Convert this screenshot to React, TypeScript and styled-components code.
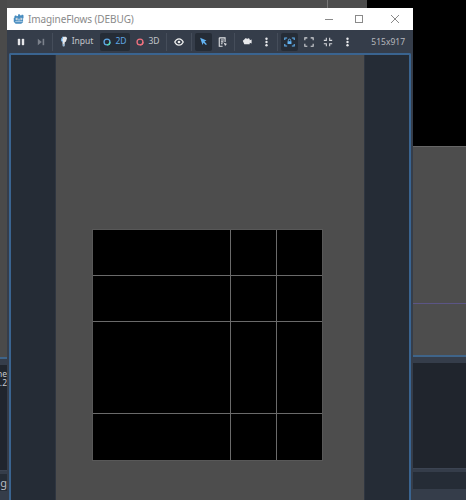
import React from "react";
import styled, { createGlobalStyle } from "styled-components";

const GlobalStyle = createGlobalStyle`
  html, body {
    margin: 0;
    padding: 0;
    width: 466px;
    height: 500px;
    overflow: hidden;
    background: #000;
    font-family: "Noto Sans", "Open Sans", sans-serif;
  }
`;

const Page = styled.div`
  display: flex;
  width: 466px;
  height: 500px;
  overflow: hidden;
`;

const BackLeft = styled.div`
  width: 7px;
  flex: none;
  display: flex;
  flex-direction: column;
  background: #4a4a4a;
`;

const BackGrey = styled.div`
  height: 349px;
  flex: none;
  background: #4a4a4a;
  border-bottom: 2px solid #3f6489;
  box-sizing: content-box;
  margin-top: 8px;
`;

const BackStrip = styled.div`
  height: 6px;
  flex: none;
  background: #353d4a;
`;

const BackLog = styled.div<{ $h: number }>`
  height: ${(p) => p.$h}px;
  flex: none;
  box-sizing: border-box;
  background: #20252d;
  border-bottom: 1px solid #3c4452;
  font: 8.5px/9px "Noto Sans", sans-serif;
  color: #c6c9ce;
  display: flex;
  flex-direction: column;
  align-items: flex-end;
  padding-top: 4px;
  overflow: hidden;
`;

const LogLine = styled.div`
  white-space: nowrap;
`;

const BackTab = styled.div`
  height: 20px;
  flex: none;
  box-sizing: border-box;
  background: #252c36;
  border-top: 3px solid #353d4a;
  color: #b9bcc2;
  font-size: 11px;
  line-height: 17px;
  text-align: right;
  overflow: hidden;
`;

const BackFoot = styled.div`
  flex: 1;
  background: #353d4a;
`;

const Middle = styled.div`
  width: 406px;
  flex: none;
  display: flex;
  flex-direction: column;
`;

const TopStrip = styled.div`
  height: 8px;
  flex: none;
  display: flex;
  background: #000;
`;

const TopGrey = styled.div`
  width: 360px;
  flex: none;
  background: #4d4d4d;
  display: flex;
  justify-content: flex-end;
  padding-right: 39px;
  box-sizing: border-box;
`;

const TopLine = styled.div`
  width: 1px;
  background: #777;
`;

const Window = styled.div`
  flex: 1;
  min-height: 0;
  display: flex;
  flex-direction: column;
  background: #353d4a;
`;

const TitleBar = styled.div`
  height: 22px;
  flex: none;
  display: flex;
  align-items: center;
  background: #fff;
  padding-left: 6px;
  color: #8a8a8a;
  font: 10px "Noto Sans", "Open Sans", sans-serif;
`;

const TitleText = styled.span`
  margin-left: 3px;
  letter-spacing: -0.1px;
`;

const WindowButtons = styled.div`
  margin-left: auto;
  display: flex;
  align-items: center;
  padding-right: 14px;
  gap: 22px;
  color: #8a8a8a;

  > :last-child {
    margin-left: 6px;
  }
`;

const Toolbar = styled.div`
  height: 23px;
  flex: none;
  display: flex;
  align-items: center;
  gap: 3px;
  padding: 0 8px 0 6px;
  color: #d6d8dc;
`;

const ToolButton = styled.div<{ $w: number; $active?: boolean; $blue?: boolean }>`
  width: ${(p) => p.$w}px;
  height: 18px;
  flex: none;
  display: flex;
  align-items: center;
  justify-content: center;
  gap: 4px;
  border-radius: 2px;
  background: ${(p) => (p.$active ? "#252c36" : "transparent")};
  color: ${(p) => (p.$blue ? "#5fa8e6" : "#c3c6cb")};
  font-size: 8.5px;
  line-height: 1;
`;

const Separator = styled.div`
  width: 1px;
  height: 18px;
  flex: none;
  background: #454d5a;
`;

const SizeLabel = styled.span`
  margin-left: auto;
  color: #b5b8bd;
  font-size: 8.5px;
`;

const Frame = styled.div`
  flex: 1;
  min-height: 0;
  margin: 0 2px 0 2px;
  display: flex;
  border: 2px solid #3a6490;
  border-bottom: none;
  border-radius: 2px 2px 0 0;
`;

const SideBar = styled.div`
  width: 44px;
  flex: none;
  background: #252c36;
`;

const Viewport = styled.div`
  flex: 1;
  background: #4d4d4d;
  padding: 174px 0 0 36px;
  box-sizing: border-box;
  border-left: 1px solid #2f3641;
  border-right: 1px solid #2f3641;
`;

const GameGrid = styled.div`
  display: grid;
  grid-template-columns: 137px 45px 45px;
  grid-template-rows: 45px 45px 91px 46px;
  gap: 1px;
  width: 229px;
  background: #6a6a6a;
  border: 1px solid #585858;
`;

const Cell = styled.div`
  background: #000;
`;

const BackRight = styled.div`
  flex: 1;
  display: flex;
  flex-direction: column;
`;

const RightBlack = styled.div`
  height: 146px;
  flex: none;
  background: #000;
`;

const RightGrey = styled.div`
  height: 211px;
  flex: none;
  background: #4d4d4d;
  border-top: 1px solid #666;
  border-bottom: 2px solid #3f6489;
  box-sizing: border-box;
  padding-top: 156px;
`;

const PurpleLine = styled.div`
  height: 1px;
  background: #5b5585;
`;

const Godot = () => (
  <svg width="12" height="12" viewBox="0 0 16 16">
    <path d="M2 4l2-1 1 1.4 1.6-.4L7 1.600h2l.4 1.400 1.600.4 1-1.400 2 1v3.600l-.6.6v5l-2.500 2H3.500L1 11.600v-5L2 6z" fill="#478cbf" />
    <circle cx="5.300" cy="8" r="1.800" fill="#fff" />
    <circle cx="10.700" cy="8" r="1.800" fill="#fff" />
    <circle cx="5.500" cy="8" r=".9" fill="#2f5f85" />
    <circle cx="10.500" cy="8" r=".9" fill="#2f5f85" />
    <rect x="7.300" y="8.500" width="1.400" height="1.500" fill="#fff" />
    <path d="M3 11.500h10" stroke="#cfe3f2" strokeWidth="1" />
  </svg>
);

const Pause = () => (
  <svg width="8" height="8" viewBox="0 0 10 10">
    <rect x="1" y="1" width="3" height="8" rx="1" fill="#e6e7ea" />
    <rect x="6" y="1" width="3" height="8" rx="1" fill="#e6e7ea" />
  </svg>
);

const Step = () => (
  <svg width="8" height="8" viewBox="0 0 10 10">
    <path d="M1 1l5 4-5 4z" fill="#7b818b" />
    <rect x="7" y="1" width="2" height="8" fill="#7b818b" />
  </svg>
);

const InputIcon = () => (
  <svg width="8" height="11" viewBox="0 0 10 14">
    <path d="M3 1h4.500L9 2.500 7.500 7 6 8 5.500 13H3.500L3 8 1 5z" fill="#e8e9ec" />
    <path d="M3 8L1 5l2-4 1 1-1.500 3 1.500 3z" fill="#5fa8e6" />
    <path d="M3.500 13h2V10h-2z" fill="#8fb6d9" />
  </svg>
);

const Ring = ({ color, color2 }: { color: string; color2: string }) => (
  <svg width="8" height="8" viewBox="0 0 10 10">
    <circle cx="5" cy="5" r="3.700" fill="none" stroke={color} strokeWidth="1.600" />
    <path d="M5 8.700A3.700 3.700 0 0 0 8.700 5" fill="none" stroke={color2} strokeWidth="1.600" />
  </svg>
);

const Eye = () => (
  <svg width="10" height="8" viewBox="0 0 12 10">
    <path d="M.7 5C2 2.300 3.800 1 6 1s4 1.300 5.300 4C10 7.700 8.200 9 6 9S2 7.700.7 5z" fill="none" stroke="#eceded" strokeWidth="1.600" />
    <circle cx="6" cy="5" r="1.700" fill="#eceded" />
  </svg>
);

const Arrow = () => (
  <svg width="9" height="9" viewBox="0 0 12 12">
    <path d="M1.500 1L10 4.500 7.300 6l3.200 3.500-1.300 1.200L6 7.500 4.700 10.500z" fill="#63b4f4" />
  </svg>
);

const ListIcon = () => (
  <svg width="10" height="10" viewBox="0 0 12 12">
    <path d="M1.500 1h7v5M1.500 1v10h4M3.500 3.500h3.500M3.500 5.800h3M3.500 8h2" fill="none" stroke="#e4e5e8" strokeWidth="1.300" />
    <path d="M7 7l4 1.500-1.600.8-.8 1.700z" fill="#e4e5e8" />
  </svg>
);

const Camera = () => (
  <svg width="10" height="9" viewBox="0 0 13 11">
    <path d="M1 4.500L3 2.800l1-1.300c1.200-.7 2.300-.2 2.700.6C7.500 1 9.500 1 10 2.500c.2.600.1 1 0 1.500L12.500 3v5L10 7v2H3z" fill="#e8e9ec" />
  </svg>
);

const Dots = () => (
  <svg width="3" height="10" viewBox="0 0 4 12">
    <circle cx="2" cy="1.700" r="1.600" fill="#e8e9ec" />
    <circle cx="2" cy="6" r="1.600" fill="#e8e9ec" />
    <circle cx="2" cy="10.300" r="1.600" fill="#e8e9ec" />
  </svg>
);

const LockFrame = () => (
  <svg width="11" height="10" viewBox="0 0 14 12" fill="none" stroke="#63b4f4" strokeWidth="1.400">
    <path d="M1 3.500V1h3M10 1h3v2.500M1 8.500V11h3M10 11h3V8.500" />
    <rect x="4.500" y="5" width="5" height="3.600" fill="#63b4f4" stroke="none" />
    <path d="M5.500 5V3.800a1.500 1.500 0 0 1 3 0V5" strokeWidth="1.100" />
  </svg>
);

const Corners = ({ inward }: { inward?: boolean }) => (
  <svg width="10" height="10" viewBox="0 0 12 12" fill="none" stroke="#d6d8dc" strokeWidth="1.300">
    {inward ? (
      <path d="M1 4h3V1M8 1v3h3M1 8h3v3M8 11V8h3" />
    ) : (
      <path d="M1 4V1h3M8 1h3v3M1 8v3h3M8 11h3V8" />
    )}
  </svg>
);

const Minimize = () => (
  <svg width="8" height="8" viewBox="0 0 8 8">
    <path d="M0 4.500h8" stroke="currentColor" />
  </svg>
);

const Maximize = () => (
  <svg width="8" height="8" viewBox="0 0 8 8">
    <rect x=".5" y=".5" width="7" height="7" fill="none" stroke="currentColor" />
  </svg>
);

const Close = () => (
  <svg width="8" height="8" viewBox="0 0 8 8">
    <path d="M0 0l8 8M8 0l-8 8" stroke="currentColor" />
  </svg>
);

const App = () => (
  <Page>
    <GlobalStyle />
    <BackLeft>
      <BackGrey />
      <BackStrip />
      <BackLog $h={106}>
        <LogLine>ne</LogLine>
        <LogLine>.2</LogLine>
      </BackLog>
      <BackTab>g</BackTab>
      <BackFoot />
    </BackLeft>
    <Middle>
      <TopStrip>
        <TopGrey>
          <TopLine />
        </TopGrey>
      </TopStrip>
      <Window>
        <TitleBar>
          <Godot />
          <TitleText>ImagineFlows (DEBUG)</TitleText>
          <WindowButtons>
            <Minimize />
            <Maximize />
            <Close />
          </WindowButtons>
        </TitleBar>
        <Toolbar>
          <ToolButton $w={16}>
            <Pause />
          </ToolButton>
          <ToolButton $w={17}>
            <Step />
          </ToolButton>
          <Separator />
          <ToolButton $w={41}>
            <InputIcon />
            Input
          </ToolButton>
          <ToolButton $w={30} $active $blue>
            <Ring color="#5fa8e6" color2="#55d8a8" />
            2D
          </ToolButton>
          <ToolButton $w={30}>
            <Ring color="#f0717f" color2="#f0717f" />
            3D
          </ToolButton>
          <Separator />
          <ToolButton $w={18}>
            <Eye />
          </ToolButton>
          <Separator />
          <ToolButton $w={17} $active>
            <Arrow />
          </ToolButton>
          <ToolButton $w={16}>
            <ListIcon />
          </ToolButton>
          <Separator />
          <ToolButton $w={17}>
            <Camera />
          </ToolButton>
          <ToolButton $w={16}>
            <Dots />
          </ToolButton>
          <Separator />
          <ToolButton $w={17} $active>
            <LockFrame />
          </ToolButton>
          <ToolButton $w={16}>
            <Corners />
          </ToolButton>
          <ToolButton $w={16}>
            <Corners inward />
          </ToolButton>
          <ToolButton $w={16}>
            <Dots />
          </ToolButton>
          <SizeLabel>515x917</SizeLabel>
        </Toolbar>
        <Frame>
          <SideBar />
          <Viewport>
            <GameGrid>
              {Array.from({ length: 12 }, (_, i) => (
                <Cell key={i} />
              ))}
            </GameGrid>
          </Viewport>
          <SideBar />
        </Frame>
      </Window>
    </Middle>
    <BackRight>
      <RightBlack />
      <RightGrey>
        <PurpleLine />
      </RightGrey>
      <BackStrip />
      <BackLog $h={106} />
      <BackTab />
      <BackFoot />
    </BackRight>
  </Page>
);

export default App;
